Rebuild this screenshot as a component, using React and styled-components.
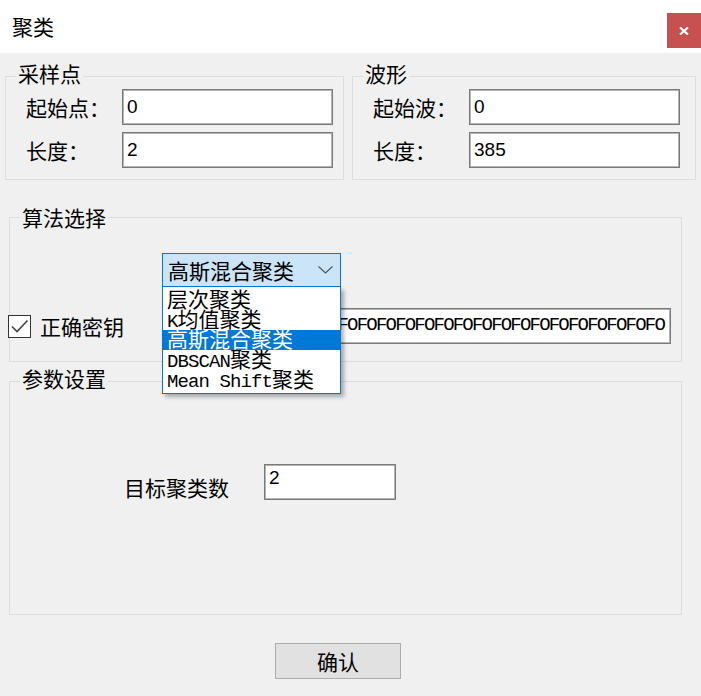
import React from 'react'
import styled, {createGlobalStyle} from 'styled-components'

const GlobalStyle = createGlobalStyle`
    body {
        margin: 0;
        background: #fff;
        font-family: "Noto Sans CJK SC", "Liberation Sans", sans-serif;
        color: #000;
    }
`;

const Window = styled.div`
    width: 701px;
    height: 696px;
    display: flex;
    flex-direction: column;
    overflow: hidden;
`;

const TitleBar = styled.div`
    height: 53px;
    flex-shrink: 0;
    background: #fff;
    display: flex;
    justify-content: space-between;
    align-items: flex-start;
`;

const Title = styled.div`
    padding-left: 12px;
    font-size: 21px;
    line-height: 52px;
`;

const CloseButton = styled.div`
    margin-top: 13px;
    width: 34px;
    height: 35px;
    background: #c75050;
    display: flex;
    align-items: center;
    justify-content: center;
`;

const Body = styled.div`
    flex: 1;
    background: #f0f0f0;
    padding-top: 10px;
`;

const TopRow = styled.div`
    display: flex;
    gap: 8px;
    padding-left: 5px;
`;

const Group = styled.fieldset`
    margin: 0;
    min-width: 0;
    padding: 0 0 ${p => p.$bottom || 0}px 0;
    width: ${p => p.$width}px;
    box-sizing: border-box;
    border: 1px solid #dcdcdc;
`;

const Legend = styled.legend`
    margin-left: 10px;
    padding: 0 2px ${p => p.$drop || 0}px 2px;
    font-size: 21px;
    line-height: 20px;
`;

const FieldGrid = styled.div`
    display: grid;
    grid-template-columns: 96px 211px;
    row-gap: 7px;
    margin-left: 20px;
`;

const Label = styled.div`
    font-size: 21px;
    line-height: 36px;
`;

const TextBox = styled.div`
    height: 36px;
    box-sizing: border-box;
    background: #fff;
    border: 1px solid #7a7a7a;
    box-shadow: inset 0 0 0 1px #b4b4b4;
    padding: ${p => p.$top ? '3px' : '0'} 4px 0 4px;
    font-family: "Liberation Sans", sans-serif;
    font-size: 19px;
    line-height: ${p => p.$top ? '20px' : '33px'};
    overflow: hidden;
    white-space: nowrap;
`;

const Lower = styled.div`
    margin-left: 9px;
    width: 673px;
`;

const AlgoGroup = styled(Group)`
    margin-top: 27px;
`;

const ParamGroup = styled(Group)`
    margin-top: 6px;
`;

const ComboWrap = styled.div`
    position: relative;
    margin: 26px 0 0 152px;
    width: 179px;
`;

const Combo = styled.div`
    height: 34px;
    box-sizing: border-box;
    border: 1px solid #0078d7;
    background: #cce4f7;
    display: flex;
    align-items: center;
    justify-content: space-between;
    padding: 0 7px 0 5px;
    font-size: 21px;
`;

const DropList = styled.div`
    position: absolute;
    top: 100%;
    left: 0;
    width: 100%;
    box-sizing: border-box;
    border: 1px solid #0078d7;
    border-top: none;
    background: #fff;
    padding: 3px 0;
    box-shadow: 3px 3px 4px rgba(0, 0, 0, 0.3);
    z-index: 2;
`;

const Item = styled.div`
    height: 20px;
    padding-left: 4px;
    font-size: 21px;
    line-height: 16px;
    white-space: nowrap;
    background: ${p => p.$active ? '#0078d7' : 'transparent'};
    color: ${p => p.$active ? '#fff' : '#000'};
`;

const Latin = styled.span`
    font-family: "Liberation Mono", monospace;
    font-size: 19px;
    letter-spacing: -0.9px;
`;

const KeyRow = styled.div`
    display: flex;
    align-items: center;
    margin: 21px 0 0 -2px;
`;

const CheckLabel = styled.div`
    width: 154px;
    display: flex;
    align-items: center;
    gap: 9px;
    font-size: 21px;
`;

const CheckBox = styled.div`
    width: 23px;
    height: 23px;
    box-sizing: border-box;
    border: 1px solid #333;
    background: #fff;
    display: flex;
`;

const KeyBox = styled(TextBox)`
    width: 509px;
    display: flex;
    justify-content: flex-end;
    padding: 6px 6px 0 0;
    font-family: "Liberation Mono", monospace;
    letter-spacing: -1.8px;
    line-height: 20px;
`;

const ParamRow = styled.div`
    display: grid;
    grid-template-columns: 140px 132px;
    margin: 70px 0 0 114px;
`;

const ParamLabel = styled.div`
    align-self: end;
    margin-bottom: 3px;
    font-size: 21px;
    line-height: 20px;
`;

const ConfirmButton = styled.button`
    margin: 28px 0 0 266px;
    width: 126px;
    height: 36px;
    background: #e1e1e1;
    border: 1px solid #adadad;
    font-family: "Noto Sans CJK SC", sans-serif;
    font-size: 21px;
    color: #000;
    padding: 0;
`;

const algorithms = [
    {latin: '', cjk: '层次聚类'},
    {latin: 'K', cjk: '均值聚类'},
    {latin: '', cjk: '高斯混合聚类'},
    {latin: 'DBSCAN', cjk: '聚类'},
    {latin: 'Mean Shift', cjk: '聚类'},
];

const selected = 2;

export default function App()
{
    return (
        <Window>
            <GlobalStyle />
            <TitleBar>
                <Title>聚类</Title>
                <CloseButton>
                    <svg width="10" height="8" viewBox="0 0 10 8">
                        <path d="M1 0.5 L9 7.5 M9 0.5 L1 7.5" stroke="#fff" strokeWidth="2.2" />
                    </svg>
                </CloseButton>
            </TitleBar>
            <Body>
                <TopRow>
                    <Group $width={339} $bottom={11}>
                        <Legend $drop={6}>采样点</Legend>
                        <FieldGrid>
                            <Label>起始点：</Label>
                            <TextBox>0</TextBox>
                            <Label>长度：</Label>
                            <TextBox>2</TextBox>
                        </FieldGrid>
                    </Group>
                    <Group $width={344} $bottom={11}>
                        <Legend $drop={6}>波形</Legend>
                        <FieldGrid>
                            <Label>起始波：</Label>
                            <TextBox>0</TextBox>
                            <Label>长度：</Label>
                            <TextBox>385</TextBox>
                        </FieldGrid>
                    </Group>
                </TopRow>
                <Lower>
                    <AlgoGroup $width={673} $bottom={17}>
                        <Legend>算法选择</Legend>
                        <ComboWrap>
                            <Combo>
                                <span>高斯混合聚类</span>
                                <svg width="15" height="8" viewBox="0 0 15 8">
                                    <path d="M0.5 0.5 L7.5 7 L14.5 0.5" fill="none" stroke="#555" strokeWidth="1.2" />
                                </svg>
                            </Combo>
                            <DropList>
                                {algorithms.map((a, i) => (
                                    <Item key={i} $active={i === selected}>
                                        {a.latin && <Latin>{a.latin}</Latin>}{a.cjk}
                                    </Item>
                                ))}
                            </DropList>
                        </ComboWrap>
                        <KeyRow>
                            <CheckLabel>
                                <CheckBox>
                                    <svg width="21" height="21" viewBox="0 0 21 21">
                                        <path d="M3 10.5 L8 15.5 L18.5 4.5" fill="none" stroke="#444" strokeWidth="1.6" />
                                    </svg>
                                </CheckBox>
                                正确密钥
                            </CheckLabel>
                            <KeyBox>{'OF'.repeat(40) + 'O'}</KeyBox>
                        </KeyRow>
                    </AlgoGroup>
                    <ParamGroup $width={673} $bottom={114}>
                        <Legend $drop={6}>参数设置</Legend>
                        <ParamRow>
                            <ParamLabel>目标聚类数</ParamLabel>
                            <TextBox $top>2</TextBox>
                        </ParamRow>
                    </ParamGroup>
                    <ConfirmButton>确认</ConfirmButton>
                </Lower>
            </Body>
        </Window>
    )
}
